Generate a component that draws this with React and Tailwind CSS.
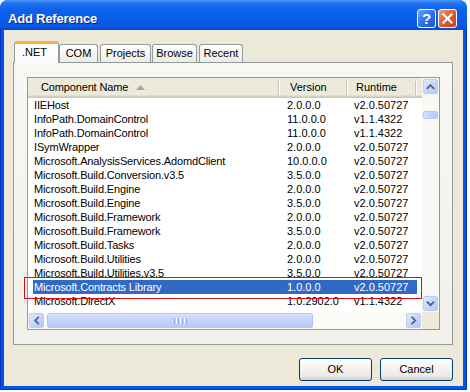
import React from "react";

const rows = [
  ["IIEHost", "2.0.0.0", "v2.0.50727"],
  ["InfoPath.DomainControl", "11.0.0.0", "v1.1.4322"],
  ["InfoPath.DomainControl", "11.0.0.0", "v1.1.4322"],
  ["ISymWrapper", "2.0.0.0", "v2.0.50727"],
  ["Microsoft.AnalysisServices.AdomdClient", "10.0.0.0", "v2.0.50727"],
  ["Microsoft.Build.Conversion.v3.5", "3.5.0.0", "v2.0.50727"],
  ["Microsoft.Build.Engine", "2.0.0.0", "v2.0.50727"],
  ["Microsoft.Build.Engine", "3.5.0.0", "v2.0.50727"],
  ["Microsoft.Build.Framework", "2.0.0.0", "v2.0.50727"],
  ["Microsoft.Build.Framework", "3.5.0.0", "v2.0.50727"],
  ["Microsoft.Build.Tasks", "2.0.0.0", "v2.0.50727"],
  ["Microsoft.Build.Utilities", "2.0.0.0", "v2.0.50727"],
  ["Microsoft.Build.Utilities.v3.5", "3.5.0.0", "v2.0.50727"],
  ["Microsoft.Contracts Library", "1.0.0.0", "v2.0.50727"],
  ["Microsoft.DirectX", "1.0.2902.0", "v1.1.4322"],
];

function Arrow({ dir }) {
  const paths = {
    up: "M4 9.5 L7.5 6 L11 9.5",
    down: "M4 6 L7.5 9.5 L11 6",
    left: "M9.5 4 L6 7.5 L9.5 11",
    right: "M6 4 L9.5 7.5 L6 11",
  };
  return (
    <div className="w-[15px] h-[15px] rounded-[2px] border border-[#BBCDF6] bg-[linear-gradient(135deg,#E3EBFE_0%,#C6D5FB_50%,#B4C8F6_100%)] flex items-center justify-center">
      <svg width="15" height="15" viewBox="0 0 15 15">
        <path d={paths[dir]} fill="none" stroke="#4D6185" strokeWidth="2" strokeLinecap="square" />
      </svg>
    </div>
  );
}

function Sep() {
  return <div className="w-[2px] h-[14px] self-center border-l border-[#C7C5B2] bg-white shrink-0" />;
}

export default function App() {
  return (
    <div className="w-[470px] h-[392px] bg-white font-['Liberation_Sans',Arial,sans-serif] text-[11px] text-black">
      <div className="w-[467px] h-[390px] flex flex-col rounded-t-[8px] overflow-hidden bg-[#0055E5]">
        {/* Title bar */}
        <div className="h-[30px] shrink-0 flex items-start pt-[9px] pl-[8px] pr-[10px] bg-[linear-gradient(to_bottom,#4A97FA_0%,#2473F2_10%,#0E62EC_30%,#0A5CEA_60%,#0556E0_90%,#0049CC_100%)]">
          <span className="flex-1 text-white font-bold text-[13px] leading-[19px] tracking-[-0.2px] [text-shadow:1px_1px_0_#0A1E8A]">
            Add Reference
          </span>
          <div className="flex gap-[2px]">
            <div className="w-[19px] h-[19px] rounded-[3px] border border-white bg-[linear-gradient(135deg,#6BA2FB_0%,#2F6FF0_50%,#1B55DA_100%)] flex items-center justify-center text-white font-bold text-[15px] leading-none">
              ?
            </div>
            <div className="w-[19px] h-[19px] rounded-[3px] border border-white bg-[linear-gradient(135deg,#F0A080_0%,#E2592F_50%,#C9401A_100%)] flex items-center justify-center">
              <svg width="11" height="11" viewBox="0 0 11 11">
                <path d="M1.5 1.5 L9.5 9.5 M9.5 1.5 L1.5 9.5" stroke="white" strokeWidth="2.2" strokeLinecap="square" />
              </svg>
            </div>
          </div>
        </div>

        {/* Frame + body */}
        <div className="flex-1 flex border-x border-b border-[#0831C8] px-[3px] pb-[3px]">
          <div className="flex-1 bg-[#ECE9D8] flex flex-col pt-[11px] pl-[9px] pr-[10px]">
            {/* Tabs */}
            <div className="h-[21px] flex items-end pl-[1px]">
              <div className="relative z-10 w-[45px] h-[22px] -mb-[1px] rounded-t-[3px] border-x border-[#919B9C] border-t-[3px] border-t-[#F7B23A] bg-[#FCFCFE] flex items-center pl-[7px] pb-[2px]">
                .NET
              </div>
              <div className="w-[39px] h-[18px] rounded-t-[3px] border border-b-0 border-[#919B9C] bg-[linear-gradient(to_bottom,#FFFFFF,#ECEBE5)] flex items-center justify-center">
                COM
              </div>
              <div className="ml-[2px] w-[51px] h-[18px] rounded-t-[3px] border border-b-0 border-[#919B9C] bg-[linear-gradient(to_bottom,#FFFFFF,#ECEBE5)] flex items-center justify-center">
                Projects
              </div>
              <div className="ml-[1px] w-[45px] h-[18px] rounded-t-[3px] border border-b-0 border-[#919B9C] bg-[linear-gradient(to_bottom,#FFFFFF,#ECEBE5)] flex items-center justify-center">
                Browse
              </div>
              <div className="ml-[2px] w-[44px] h-[18px] rounded-t-[3px] border border-b-0 border-[#919B9C] bg-[linear-gradient(to_bottom,#FFFFFF,#ECEBE5)] flex items-center justify-center">
                Recent
              </div>
            </div>

            {/* Panel */}
            <div className="h-[283px] border border-[#919B9C] bg-[linear-gradient(to_bottom,#F8F7F3,#F1F0EA)] pt-[14px] pl-[13px] pr-[12px] pb-[14px]">
              <div className="relative w-[413px] h-[253px] border border-[#7F9DB9] bg-white flex">
                {/* left area */}
                <div className="w-[394px] flex flex-col">
                  {/* header */}
                  <div className="h-[20px] shrink-0 flex bg-[#EBEADB] shadow-[inset_0_-1px_0_#CBC7B8,inset_0_-2px_0_#D6D2C2,inset_0_-3px_0_#E2DECD]">
                    <div className="w-[250px] flex items-center pl-[13px] pb-[1px] tracking-[-0.15px]">
                      <span>Component Name</span>
                      <svg className="ml-[8px]" width="9" height="5" viewBox="0 0 9 5">
                        <path d="M0 5 L4.5 0 L9 5 Z" fill="#ACA899" />
                      </svg>
                    </div>
                    <Sep />
                    <div className="w-[66px] flex items-center pl-[10px] pb-[1px]">Version</div>
                    <Sep />
                    <div className="w-[67px] flex items-center pl-[8px] pb-[1px]">Runtime</div>
                    <Sep />
                    <div className="flex-1" />
                  </div>
                  {/* rows */}
                  <div className="h-[214px] overflow-hidden">
                    {rows.map((r, i) => {
                      const sel = i === 13;
                      return (
                        <div key={i} className="h-[14px] leading-[14px] flex pl-[5px] whitespace-nowrap">
                          <div className={`w-[384px] flex ${sel ? "bg-[#316AC5] text-white" : ""}`}>
                            <div className="w-[247px] pl-[1px] overflow-hidden tracking-[-0.15px]">{r[0]}</div>
                            <div className="w-[68px] pl-[7px] overflow-hidden">{r[1]}</div>
                            <div className="w-[69px] pl-[6px] overflow-hidden">{r[2]}</div>
                          </div>
                        </div>
                      );
                    })}
                  </div>
                  {/* horizontal scrollbar */}
                  <div className="h-[17px] shrink-0 flex items-center pl-[1px] bg-[#FBFBF8]">
                    <Arrow dir="left" />
                    <div className="ml-[3px] w-[266px] h-[15px] rounded-[2px] border border-[#B3C6F4] bg-[linear-gradient(to_bottom,#D8E3FD,#C2D2FA_50%,#B6C9F6)] flex items-center justify-center gap-[1px]">
                      <div className="w-[1px] h-[6px] bg-[#8EACEF]" />
                      <div className="w-[1px] h-[6px] bg-white" />
                      <div className="w-[1px] h-[6px] bg-[#8EACEF]" />
                      <div className="w-[1px] h-[6px] bg-white" />
                      <div className="w-[1px] h-[6px] bg-[#8EACEF]" />
                      <div className="w-[1px] h-[6px] bg-white" />
                      <div className="w-[1px] h-[6px] bg-[#8EACEF]" />
                    </div>
                    <div className="flex-1" />
                    <div className="mr-[1px]">
                      <Arrow dir="right" />
                    </div>
                  </div>
                </div>
                {/* vertical scrollbar */}
                <div className="w-[17px] flex flex-col">
                  <div className="h-[234px] flex flex-col items-center pt-[1px] pb-[1px] bg-[#F8F8F4]">
                    <Arrow dir="up" />
                    <div className="mt-[17px] w-[15px] h-[8px] rounded-[2px] border border-[#B3C6F4] bg-[linear-gradient(to_right,#D8E3FD,#C2D2FA_50%,#B6C9F6)]" />
                    <div className="flex-1" />
                    <Arrow dir="down" />
                  </div>
                  <div className="h-[17px] bg-[#ECE9D8]" />
                </div>

                {/* red annotation rectangle */}
                <div className="absolute left-[-4px] top-[199px] w-[398px] h-[22px] border border-[#D01414] pointer-events-none" />
              </div>
            </div>

            {/* Buttons */}
            <div className="mt-[13px] flex justify-end gap-[8px]">
              <div className="w-[73px] h-[23px] rounded-[3px] border border-[#003C74] bg-[linear-gradient(to_bottom,#FFFFFF_0%,#F5F4F0_40%,#ECEBE6_80%,#D6D0C5_100%)] flex items-center justify-center">
                OK
              </div>
              <div className="w-[73px] h-[23px] rounded-[3px] border border-[#003C74] bg-[linear-gradient(to_bottom,#FFFFFF_0%,#F5F4F0_40%,#ECEBE6_80%,#D6D0C5_100%)] flex items-center justify-center">
                Cancel
              </div>
            </div>
          </div>
        </div>
      </div>
    </div>
  );
}
